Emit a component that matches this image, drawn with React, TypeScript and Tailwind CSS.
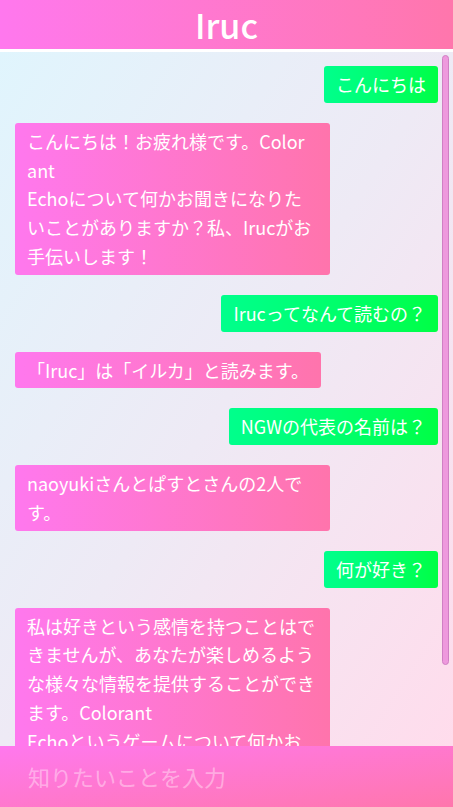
const messages: { from: "user" | "bot"; lines: string[] }[] = [
  { from: "user", lines: ["こんにちは"] },
  {
    from: "bot",
    lines: [
      "こんにちは！お疲れ様です。Color",
      "ant",
      "Echoについて何かお聞きになりた",
      "いことがありますか？私、Irucがお",
      "手伝いします！",
    ],
  },
  { from: "user", lines: ["Irucってなんて読むの？"] },
  { from: "bot", lines: ["「Iruc」は「イルカ」と読みます。"] },
  { from: "user", lines: ["NGWの代表の名前は？"] },
  { from: "bot", lines: ["naoyukiさんとぱすとさんの2人で", "す。"] },
  { from: "user", lines: ["何が好き？"] },
  {
    from: "bot",
    lines: [
      "私は好きという感情を持つことはで",
      "きませんが、あなたが楽しめるよう",
      "な様々な情報を提供することができ",
      "ます。Colorant",
      "Echoというゲームについて何かお",
      "聞きになりたいことがあれば、お気",
      "軽にどうぞ！",
    ],
  },
];

const Bubble: React.FC<{ from: "user" | "bot"; lines: string[] }> = ({
  from,
  lines,
}) => {
  const isUser = from === "user";
  const multi = lines.length > 1;
  return (
    <div className={isUser ? "flex justify-end" : "flex justify-start"}>
      <div
        className={
          isUser
            ? "rounded-[3px] bg-linear-to-r from-[#00ff8c] to-[#00ff44] px-[12px] py-[4px] text-white whitespace-nowrap"
            : multi
              ? "w-[315px] rounded-[3px] bg-linear-to-r from-[#ff78ee] to-[#ff74ac] px-[12px] py-[4px] text-white whitespace-nowrap"
              : "rounded-[3px] bg-linear-to-r from-[#ff78ee] to-[#ff74ac] px-[12px] py-[4px] text-white whitespace-nowrap"
        }
      >
        {lines.map((line, i) => (
          <div key={i}>{line}</div>
        ))}
      </div>
    </div>
  );
};

export default function App() {
  return (
    <div
      className="flex h-[807px] w-[453px] flex-col overflow-hidden bg-white"
      style={{ fontFamily: '"Noto Sans CJK JP", "Noto Sans", sans-serif' }}
    >
      <header className="flex h-[49px] shrink-0 items-center justify-center bg-linear-to-r from-[#ff78ee] to-[#ff76ac]">
        <h1 className="text-[34px] font-medium leading-none text-white">
          Iruc
        </h1>
      </header>

      <main className="relative mt-[3px] flex-1 overflow-hidden bg-linear-to-br from-[#e0f5fd] via-[#eeeaf5] to-[#ffdcec]">
        <div className="flex flex-col gap-[20px] pl-[15px] pr-[15px] pt-[14px] text-[18px] leading-[28.8px]">
          {messages.map((m, i) => (
            <Bubble key={i} from={m.from} lines={m.lines} />
          ))}
        </div>
        <div className="absolute right-[4px] top-[3px] h-[610px] w-[7px] rounded-full border border-[#d07fc4] bg-[#ee99dd]" />
      </main>

      <footer className="flex h-[61px] shrink-0 items-center bg-linear-to-br from-[#ff78ee] to-[#ff76ac] px-[28px]">
        <input
          className="w-full bg-transparent text-[22px] text-white outline-none placeholder:text-white/40"
          placeholder="知りたいことを入力"
        />
      </footer>
    </div>
  );
}
